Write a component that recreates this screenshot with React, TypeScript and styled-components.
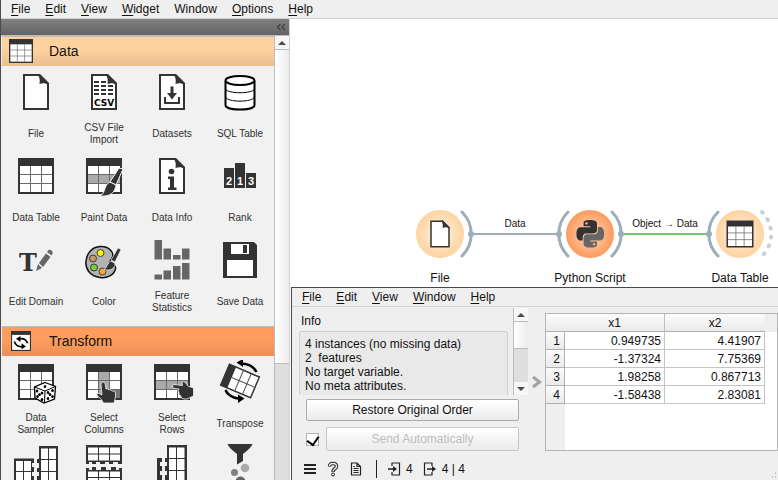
import React, { ReactNode } from "react";
import styled, { createGlobalStyle } from "styled-components";

const dark = "#333333";
const mid = "#666666";

const GlobalStyle = createGlobalStyle`
  * { box-sizing: border-box; }
  html, body, #root { height: 100%; }
  body {
    margin: 0;
    overflow: hidden;
    background: #ffffff;
    color: #111111;
    font: 12px/14px "Liberation Sans", Arial, sans-serif;
  }
  button, input { font: inherit; margin: 0; }
`;

/* ---------- layout ---------- */

const Shell = styled.div`
  display: flex;
  flex-direction: column;
  height: 100vh;
  border-left: 1px solid #4a4a4a;
`;

const MenuBar = styled.nav<{ $line: string }>`
  display: flex;
  flex: none;
  align-items: center;
  gap: 15px;
  height: 19px;
  padding: 0 10px;
  background: #efefef;
  border-bottom: 1px solid ${(p) => p.$line};
`;

const MenuButton = styled.button`
  padding: 0;
  border: 0;
  background: none;
  color: #111111;
  line-height: 16px;
  white-space: nowrap;
  u { text-underline-offset: 2px; }
`;

const Main = styled.div`
  display: flex;
  flex: 1;
  min-height: 0;
`;

const Sidebar = styled.aside`
  display: flex;
  flex: none;
  flex-direction: column;
  width: 289px;
  background: #f1f1f1;
  border-right: 1px solid #cdd2d2;
`;

const DockHeader = styled.div`
  display: flex;
  flex: none;
  align-items: center;
  justify-content: flex-end;
  height: 16px;
  padding-right: 3px;
  background: linear-gradient(#808080, #646464);
`;

const CollapseButton = styled.button`
  display: flex;
  padding: 0;
  border: 0;
  background: none;
`;

const ToolboxRow = styled.div`
  display: flex;
  flex: 1;
  min-height: 0;
  border-top: 1px solid #bdbdbd;
`;

const Toolbox = styled.div`
  flex: 1;
  min-width: 0;
  overflow: hidden;
  padding-left: 1px;
`;

const CategoryHeader = styled.button<{ $from: string; $to: string }>`
  display: flex;
  align-items: center;
  width: 100%;
  height: 30px;
  padding: 0 0 1px 7px;
  border: 0;
  border-top: 1px solid #bdbdbd;
  background: linear-gradient(${(p) => p.$from} 45%, ${(p) => p.$to});
  color: #111111;
  font-size: 14px;
  text-align: left;
`;

const CategoryIcon = styled.span`
  display: flex;
  justify-content: center;
  width: 24px;
  margin-right: 16px;
`;

const WidgetGrid = styled.div`
  display: grid;
  grid-template-columns: repeat(4, 1fr);
  grid-auto-rows: 84px;
  padding-bottom: 8px;
`;

const WidgetCell = styled.button`
  display: flex;
  flex-direction: column;
  align-items: center;
  justify-content: flex-start;
  padding: 4px 0 0;
  border: 0;
  background: none;
  color: #303030;
  font-size: 10px;
  line-height: 12px;
`;

const WidgetLabel = styled.span`
  display: flex;
  align-items: center;
  height: 32px;
  margin-top: 4px;
  text-align: center;
  white-space: pre-line;
`;

const ScrollTrack = styled.div`
  display: flex;
  flex: none;
  flex-direction: column;
  width: 15px;
  background: #dedede;
  border-left: 1px solid #bcbcbc;
`;

const ScrollButton = styled.button`
  display: flex;
  flex: none;
  align-items: center;
  justify-content: center;
  height: 13px;
  padding: 0;
  border: 0;
  background: #f7f7f7;
`;

const ScrollThumb = styled.div<{ $share: string }>`
  flex: none;
  height: ${(p) => p.$share};
  background: linear-gradient(to right, #ffffff, #ececec);
  border: solid #bcbcbc;
  border-width: 1px 0;
`;

const Spacer = styled.div`
  flex: 1;
`;

const Workspace = styled.main`
  display: flex;
  flex: 1;
  flex-direction: column;
  min-width: 0;
  background: #ffffff;
`;

/* ---------- workflow canvas ---------- */

const Canvas = styled.section`
  position: relative;
  flex: none;
  height: 268px;
  overflow: hidden;
`;

const Wires = styled.svg`
  position: absolute;
  left: 0;
  top: 0;
`;

const NodeCaption = styled.span<{ $x: number }>`
  position: absolute;
  left: ${(p) => p.$x - 50}px;
  top: 252px;
  width: 100px;
  text-align: center;
`;

const LinkCaption = styled.span<{ $x: number }>`
  position: absolute;
  left: ${(p) => p.$x - 45}px;
  top: 199px;
  width: 90px;
  font-size: 10px;
  line-height: 12px;
  text-align: center;
`;

/* ---------- data table window ---------- */

const Dialog = styled.section`
  display: flex;
  flex: 1;
  flex-direction: column;
  min-height: 0;
  margin-left: 1px;
  background: #efefef;
  border: solid #484848;
  border-width: 1px 0 0 1px;
`;

const DialogBody = styled.div`
  display: flex;
  flex: none;
  height: 144px;
`;

const Controls = styled.div`
  display: flex;
  flex: none;
  flex-direction: column;
  width: 236px;
  padding: 1px 0 0 7px;
`;

const InfoScroll = styled.div`
  display: flex;
  height: 87px;
`;

const InfoPane = styled.div`
  flex: 1;
  overflow: hidden;
  padding-right: 5px;
`;

const InfoTitle = styled.h2`
  margin: 0;
  padding: 6px 0 3px 2px;
  font-size: 12px;
  font-weight: normal;
`;

const InfoBox = styled.div`
  height: 90px;
  padding: 5px;
  background: #e9e9e9;
  border: 1px solid #cecece;
  border-radius: 2px;
  white-space: pre;
`;

const ActionArea = styled.div`
  display: flex;
  flex-direction: column;
  gap: 6px;
  padding: 4px 9px 0 7px;
`;

const PushButton = styled.button`
  flex: 1;
  min-height: 22px;
  padding: 0;
  background: linear-gradient(#ffffff, #ebebeb);
  border: 1px solid #ababab;
  border-radius: 2px;
  color: #111111;
  &:disabled {
    min-height: 24px;
    color: #bdbdbd;
    border-color: #c6c6c6;
  }
`;

const AutoRow = styled.div`
  display: flex;
  align-items: center;
  gap: 7px;
`;

const Check = styled.input`
  display: grid;
  place-content: center;
  appearance: none;
  width: 13px;
  height: 13px;
  background: #ffffff;
  border: 1px solid #b0b0b0;
  &:checked::before {
    content: "";
    width: 6px;
    height: 9px;
    border: solid #000000;
    border-width: 0 2px 2px 0;
    transform: rotate(35deg);
  }
`;

const Splitter = styled.button`
  display: flex;
  flex: none;
  align-items: center;
  width: 17px;
  padding: 6px 0 0 3px;
  border: 0;
  background: none;
`;

const TableFrame = styled.div`
  flex: 1;
  min-width: 0;
  margin-top: 6px;
  background: linear-gradient(to right, #efefef 19px, #ffffff 19px);
  border: 1px solid #b4b4b4;
`;

const Grid = styled.table`
  width: 100%;
  table-layout: fixed;
  border-spacing: 0;
`;

const HeadCell = styled.th<{ $width?: number; $divider?: boolean }>`
  width: ${(p) => (p.$width ? `${p.$width}px` : "auto")};
  height: 18px;
  padding: 0;
  background: ${(p) => (p.$width ? "linear-gradient(#fbfbfb, #eaeaea)" : "#efefef")};
  border-bottom: 1px solid ${(p) => (p.$width ? "#b0b0b0" : "#efefef")};
  border-right: ${(p) => (p.$divider ? "1px solid #bdbdbd" : "0")};
  font-weight: normal;
`;

const RowHead = styled.th`
  height: 18px;
  padding: 0 4px 0 0;
  background: linear-gradient(#fbfbfb, #eaeaea);
  border: solid #b0b0b0;
  border-width: 0 1px 1px 0;
  font-weight: normal;
  text-align: right;
`;

const Cell = styled.td`
  padding: 0 3px 0 0;
  background: #ffffff;
  border: solid #c4c4c4;
  border-width: 0 1px 1px 0;
  text-align: right;
`;

const StatusBar = styled.footer`
  display: flex;
  flex: 1;
  align-items: center;
  min-height: 0;
  padding: 6px 0 0 10px;
`;

const IconButton = styled.button`
  display: flex;
  align-items: center;
  justify-content: center;
  width: 16px;
  height: 16px;
  margin-right: 7px;
  padding: 0;
  border: 0;
  background: none;
`;

const StatusDivider = styled.span`
  width: 1px;
  height: 18px;
  margin: 0 10px 0 5px;
  background: #222222;
`;

const Count = styled.span`
  display: flex;
  align-items: center;
  gap: 5px;
  margin-right: 10px;
`;

const Grip = styled.svg`
  align-self: flex-end;
  margin-left: auto;
`;

/* ---------- drawings ---------- */

const Sheet = ({ children }: { children?: ReactNode }) => (
  <g>
    <path d="M10 5H25L34 14V39H10Z" fill="#fff" stroke={dark} strokeWidth="2" />
    <path d="M23 4C26 7 26 10 25.500 14C29 12.500 32 13 35 15V13L26 4Z" fill={dark} />
    {children}
  </g>
);

const Spreadsheet = ({ children, marks }: { children?: ReactNode; marks?: ReactNode }) => (
  <g>
    <rect x="4" y="4" width="36" height="36" fill={dark} />
    <rect x="6" y="12" width="32" height="26" fill="#fff" />
    {marks}
    <path d="M16.500 12V38M27.500 12V38M6 20.500H38M6 29.500H38" stroke="#6a6a6a" fill="none" />
    {children}
  </g>
);

const Brush = () => (
  <g stroke="#f4f4f4" strokeWidth="1" fill={dark}>
    <path d="M37 14L41 15L34 31L28 28Z" />
    <path d="M28 28L34 31C33 38 29 43 18 42C22 40 22 36 24 32C25 30 26 29 28 28Z" />
  </g>
);

const Pips = ({ points }: { points: number[][] }) => (
  <g fill="#000">
    {points.map(([x, y]) => (
      <ellipse key={`${x}-${y}`} cx={x} cy={y} rx="1.300" ry="1.500" />
    ))}
  </g>
);

const PYTHON =
  "M14.25.18l.9.2.73.26.59.3.45.32.34.34.25.34.16.33.1.3.04.26.02.2-.01.13V8.5l-.05.63-.13.55-.21.46-.26.38-.3.31-.33.25-.35.19-.35.14-.33.1-.3.07-.26.04-.21.02H8.77l-.69.05-.59.14-.5.22-.41.27-.33.32-.27.35-.2.36-.15.37-.1.35-.07.32-.04.27-.02.21v3.06H3.17l-.21-.03-.28-.07-.32-.12-.35-.18-.36-.26-.36-.36-.35-.46-.32-.59-.28-.73-.21-.88-.14-1.05-.05-1.23.06-1.22.16-1.04.24-.87.32-.71.36-.57.4-.44.42-.33.42-.24.4-.16.36-.1.32-.05.24-.01h.16l.06.01h8.16v-.83H6.18l-.01-2.75-.02-.37.05-.34.11-.31.17-.28.25-.26.31-.23.38-.2.44-.18.51-.15.58-.12.64-.1.71-.06.77-.04.84-.02 1.27.05zm-6.3 1.98l-.23.33-.08.41.08.41.23.34.33.22.41.09.41-.09.33-.22.23-.34.08-.41-.08-.41-.23-.33-.33-.22-.41-.09-.41.09z";

const art: Record<string, ReactNode> = {
  file: <Sheet />,
  csv: (
    <Sheet>
      <path
        d="M12 12H17M19 12H24M12 16H17M19 16H24M26 16H31M12 20H17M19 20H24M26 20H31M12 24H17M19 24H24M26 24H31"
        stroke={dark}
        strokeWidth="2"
      />
      <text x="22" y="36" textAnchor="middle" fontFamily="DejaVu Sans, sans-serif" fontWeight="bold" fontSize="9" fill="#000">
        CSV
      </text>
    </Sheet>
  ),
  datasets: (
    <Sheet>
      <path d="M20.500 16.500H23.500V23H27L22 29.500L17 23H20.500Z" fill={dark} />
      <path d="M15 27V33H29V27" stroke={dark} strokeWidth="2" fill="none" />
    </Sheet>
  ),
  sql: (
    <g fill="#fff" stroke="#000">
      <path d="M7.500 11V35C7.500 41 36.500 41 36.500 35V11" strokeWidth="2" />
      <path d="M7.500 19C9 24 35 24 36.500 19M7.500 27C9 32.500 35 32.500 36.500 27" strokeWidth="1" fill="none" />
      <ellipse cx="22" cy="10.500" rx="14.500" ry="4.500" strokeWidth="2" />
    </g>
  ),
  table: <Spreadsheet />,
  paint: (
    <Spreadsheet marks={<rect x="6" y="20" width="32" height="9" fill="#aaa" />}>
      <Brush />
    </Spreadsheet>
  ),
  info: (
    <Sheet>
      <circle cx="21.500" cy="17.500" r="2.800" fill={dark} />
      <path d="M18 22.500H24V33.500H26.500V36H18V33.500H20V25H18Z" fill={dark} />
    </Sheet>
  ),
  rank: (
    <g fill={dark}>
      <path d="M6 14H16V34H6ZM17 9H27V34H17ZM28 19H38V34H28Z" />
      <g fill="#fff" fontFamily="Liberation Sans, sans-serif" fontWeight="bold" fontSize="11" textAnchor="middle">
        <text x="11" y="31">2</text>
        <text x="22" y="31">1</text>
        <text x="33" y="31">3</text>
      </g>
    </g>
  ),
  domain: (
    <g>
      <text x="14" y="33" textAnchor="middle" fontFamily="DejaVu Serif, serif" fontWeight="bold" fontSize="24" fill={dark}>
        T
      </text>
      <path d="M22 33L24 26L28 30ZM25 25L32 15.500L36.500 19L29 29ZM33 14L34.500 12Q36 11 38 13Q39 14 38.500 15.500L37.500 17.500Z" fill={mid} />
    </g>
  ),
  color: (
    <g>
      <path
        d="M18 8.500C27 8 32 14 30.500 19C29 23 26 24 28 26C31 28 34 26 33.500 31C32 37 25 40.500 18 39.500C8 38 3 31 4 23C5 15 10 9 18 8.500Z"
        fill="#b3b3b3"
        stroke="#111"
        strokeWidth="1.500"
      />
      <g stroke="#222" strokeWidth=".8">
        <circle cx="18.500" cy="15" r="3.500" fill="#fff200" />
        <circle cx="11" cy="20.500" r="3.500" fill="#c49a6c" />
        <circle cx="12" cy="29.500" r="3.500" fill="#7ac943" />
        <circle cx="20.500" cy="33.500" r="3.500" fill="#fba63c" />
      </g>
      <path d="M36 10L39 11.500L33 24L29 22Z" fill={dark} stroke="#eee" strokeWidth=".7" />
      <path d="M29 23L33 25.500C33 31 28 33 22 31.500C25 30 25 25 29 23Z" fill={dark} stroke="#eee" strokeWidth=".7" />
    </g>
  ),
  stats: (
    <path
      d="M4.500 2H12V21.500H4.500ZM13.500 10.500H21V21.500H13.500ZM23 17H30.500V21.500H23ZM32 10.500H39.500V21.500H32ZM4.500 36.500H12V41.500H4.500ZM13.500 32.500H21V41.500H13.500ZM23 28H30.500V41.500H23ZM32 25H39.500V41.500H32Z"
      fill={mid}
    />
  ),
  save: (
    <g>
      <path d="M5 4H36L39 7V40H5Z" fill={dark} />
      <path d="M13 6H31V16H13ZM9 22H35V38H9Z" fill="#fff" />
      <path d="M25 7H29V15H25Z" fill={dark} />
    </g>
  ),
  sampler: (
    <Spreadsheet>
      <path d="M31 22.500L41.500 26.500L40.500 39L30 43L21 38L20.500 27Z" fill="#fff" stroke="#000" strokeWidth="1.300" />
      <path d="M20.500 27L31 31L41.500 26.500M31 31L30.500 43" fill="none" stroke="#000" />
      <Pips
        points={[
          [31, 26.5], [23, 31], [28, 33], [25.5, 34.5], [23.5, 36.5], [28, 39.5],
          [34, 32.5], [38.5, 30.5], [36, 34.5], [34, 38.5], [38.5, 36.5],
        ]}
      />
    </Spreadsheet>
  ),
  columns: (
    <Spreadsheet
      marks={
        <>
          <rect x="17" y="12" width="10" height="26" fill="#aaa" />
          <rect x="28" y="30" width="10" height="8" fill="#777" />
        </>
      }
    >
      <path
        d="M19 24Q19 22 21 22Q23 22 23.200 24L24 29Q26 28 27 30Q29 29 30 31Q33 30 33.500 33V37L32 43H21.500Q20 39 15.500 36Q14 34 16 33L20 35Z"
        fill={dark}
        stroke="#f4f4f4"
        strokeWidth=".8"
      />
    </Spreadsheet>
  ),
  rows: (
    <Spreadsheet marks={<rect x="6" y="20" width="32" height="9" fill="#aaa" />}>
      <path
        d="M24 24.500Q22 25 22.500 27Q23 28.500 25 28.500L29 29Q27 31 29 32Q28 35 30.500 35.500Q31 39 34 39H37L43.500 36V28L38 26Q35 21.500 33.500 21.500Q31 22 32.500 25.500Z"
        fill={dark}
        stroke="#f4f4f4"
        strokeWidth=".8"
      />
    </Spreadsheet>
  ),
  transpose: (
    <g>
      <g transform="rotate(23 22 21)">
        <rect x="5" y="9" width="34" height="24" fill={dark} />
        <rect x="13" y="10.500" width="24.500" height="21" fill="#fff" />
        <path d="M21 10V32M29.500 10V32M13 21H38" stroke="#555" fill="none" />
      </g>
      <path d="M38.500 12C36 7 31 4 24 3.500M7.500 30C9 34 14 38 20 38.500" stroke="#000" strokeWidth="2.500" fill="none" />
      <path d="M25 -1V7L18.500 2.500ZM20 34.500V43L26.500 38.500Z" fill="#000" />
    </g>
  ),
  mergeCols: (
    <g>
      <path d="M0 14.500H20V19H18V23H20V28H18V32H20V44H0ZM25 2H44V44H25V36H23V32H25V28H23V24H25V19H23V15H25Z" fill={dark} />
      <path d="M2 17H9V27H2ZM10 17H17V27H10ZM2 28H9V44H2ZM10 28H17V44H10ZM27 4.500H34V15H27ZM35 4.500H42V15H35ZM27 16H34V27H27ZM35 16H42V27H35ZM27 28H34V44H27ZM35 28H42V44H35Z" fill="#fff" />
    </g>
  ),
  concat: (
    <g>
      <path d="M4 1H40V20H36V18H31V20H27V18H23V20H18V18H14V20H10V18H7V20H4ZM4 24H7V26H10V23H14V26H19V23H24V26H29V23H34V26H37V24H40V44H4Z" fill={dark} />
      <path d="M6 3.500H16V9.500H6ZM17 3.500H27V9.500H17ZM28 3.500H38V9.500H28ZM6 10.500H16V16.500H6ZM17 10.500H27V16.500H17ZM28 10.500H38V16.500H28ZM6 27.500H16V33H6ZM17 27.500H27V33H17ZM28 27.500H38V33H28ZM6 34H16V44H6ZM17 34H27V44H17ZM28 34H38V44H28Z" fill="#fff" />
    </g>
  ),
  mergeRows: (
    <g>
      <path d="M17 1H37V44H17V36H15V31H17V27H15V22H17V18H15V14H17ZM7 14H12V18H10V22H12V27H10V31H12V44H7Z" fill={dark} />
      <path d="M19 3.500H26V14H19ZM27 3.500H34.500V14H27ZM19 15H26V26H19ZM27 15H34.500V26H27ZM19 27H26V44H19ZM27 27H34.500V44H27Z" fill="#fff" />
    </g>
  ),
  funnel: (
    <g>
      <path d="M9.500 0H34.500Q33 4 25 10V17L19 20.500V10Q11 4 9.500 0Z" fill={dark} />
      <circle cx="27" cy="24" r="4.300" fill="#aaa" />
      <circle cx="16.500" cy="28.500" r="3.500" fill="#808080" />
      <circle cx="22.500" cy="37.500" r="5" fill={mid} />
    </g>
  ),
  cycle: (
    <g>
      <rect x="4" y="4" width="36" height="36" fill={dark} />
      <rect x="6" y="11" width="32" height="27" fill="#fff" />
      <g fill="none" stroke="#000" strokeWidth="3">
        <path d="M19 18Q30 16 34 26M25 32Q14 34 10 23" />
      </g>
      <path d="M21 13V24L13 18ZM23 26V37L31 32Z" fill="#000" />
    </g>
  ),
};

const Art = ({ name, size = 44, crop = "0 0 44 44" }: { name: string; size?: number; crop?: string }) => (
  <svg width={size} height={size} viewBox={crop} aria-hidden="true">
    {art[name]}
  </svg>
);

const Arrow = ({ down = false }: { down?: boolean }) => (
  <svg width="8" height="4" viewBox="0 0 8 4" aria-hidden="true">
    <path d={down ? "M0 0H8L4 4Z" : "M0 4H8L4 0Z"} fill="#4a4a4a" />
  </svg>
);

/* ---------- data ---------- */

const mainMenu = ["_File", "_Edit", "_View", "_Widget", "Window", "_Options", "_Help"];
const dialogMenu = ["_File", "_Edit", "_View", "_Window", "_Help"];

const dataWidgets = [
  ["file", "File"],
  ["csv", "CSV File\nImport"],
  ["datasets", "Datasets"],
  ["sql", "SQL Table"],
  ["table", "Data Table"],
  ["paint", "Paint Data"],
  ["info", "Data Info"],
  ["rank", "Rank"],
  ["domain", "Edit Domain"],
  ["color", "Color"],
  ["stats", "Feature\nStatistics"],
  ["save", "Save Data"],
];

const transformWidgets = [
  ["sampler", "Data\nSampler"],
  ["columns", "Select\nColumns"],
  ["rows", "Select\nRows"],
  ["transpose", "Transpose"],
  ["mergeCols", ""],
  ["concat", ""],
  ["mergeRows", ""],
  ["funnel", ""],
];

const rows = [
  ["0.949735", "4.41907"],
  ["-1.37324", "7.75369"],
  ["1.98258", "0.867713"],
  ["-1.58438", "2.83081"],
];

const Menu = ({ items, line }: { items: string[]; line: string }) => (
  <MenuBar $line={line}>
    {items.map((item) => (
      <MenuButton key={item} type="button">
        {item.startsWith("_") ? (
          <>
            <u>{item[1]}</u>
            {item.slice(2)}
          </>
        ) : (
          item
        )}
      </MenuButton>
    ))}
  </MenuBar>
);

const Widgets = ({ items }: { items: string[][] }) => (
  <WidgetGrid>
    {items.map(([icon, label]) => (
      <WidgetCell key={icon} type="button">
        <Art name={icon} />
        <WidgetLabel>{label}</WidgetLabel>
      </WidgetCell>
    ))}
  </WidgetGrid>
);

const Workflow = () => (
  <Canvas>
    <Wires width="600" height="268" viewBox="0 0 600 268" aria-hidden="true">
      <defs>
        <radialGradient id="sand">
          <stop offset="0" stopColor="#fff3e4" />
          <stop offset="1" stopColor="#ffd39f" />
        </radialGradient>
        <radialGradient id="coral">
          <stop offset="0" stopColor="#ffd9c2" />
          <stop offset="1" stopColor="#ff9a5c" />
        </radialGradient>
      </defs>
      <path d="M181 215H269" stroke="#9caeb9" strokeWidth="2" />
      <path d="M331 215H419" stroke="#6cc967" strokeWidth="2" />
      <circle cx="150" cy="215" r="24" fill="url(#sand)" />
      <circle cx="300" cy="215" r="24" fill="url(#coral)" />
      <circle cx="450" cy="215" r="24" fill="url(#sand)" />
      <g fill="none" stroke="#9caeb9" strokeWidth="3" strokeLinecap="round">
        <path d="M172 193A31 31 0 0 1 172 237M278 193A31 31 0 0 0 278 237" />
        <path d="M322 193A31 31 0 0 1 322 237M428 193A31 31 0 0 0 428 237" />
        <path d="M472 193A31 31 0 0 1 472 237" stroke="#c8d1d6" strokeWidth="4" strokeDasharray="1 8" />
      </g>
      <g fill="#9caeb9">
        <circle cx="181" cy="215" r="3" />
        <circle cx="269" cy="215" r="3" />
        <circle cx="331" cy="215" r="3" />
        <circle cx="419" cy="215" r="3" />
      </g>
      <g transform="translate(133.500 198.500) scale(.75)">{art.file}</g>
      <g transform="translate(433.500 198.500) scale(.75)">{art.table}</g>
      <g transform="translate(286.500 201) scale(1.150)">
        <path d={PYTHON} fill={dark} />
        <path d={PYTHON} fill={mid} transform="rotate(180 12 12)" />
      </g>
    </Wires>
    <LinkCaption $x={225}>Data</LinkCaption>
    <LinkCaption $x={375}>Object → Data</LinkCaption>
    <NodeCaption $x={150}>File</NodeCaption>
    <NodeCaption $x={300}>Python Script</NodeCaption>
    <NodeCaption $x={450}>Data Table</NodeCaption>
  </Canvas>
);

const TableWindow = () => (
  <Dialog>
    <Menu items={dialogMenu} line="#d2d2d2" />
    <DialogBody>
      <Controls>
        <InfoScroll>
          <InfoPane>
            <InfoTitle>Info</InfoTitle>
            <InfoBox>{"4 instances (no missing data)\n2  features\nNo target variable.\nNo meta attributes."}</InfoBox>
          </InfoPane>
          <ScrollTrack>
            <ScrollButton type="button" aria-label="Scroll up">
              <Arrow />
            </ScrollButton>
            <ScrollThumb $share="28px" />
            <Spacer />
            <ScrollButton type="button" aria-label="Scroll down">
              <Arrow down />
            </ScrollButton>
          </ScrollTrack>
        </InfoScroll>
        <ActionArea>
          <PushButton type="button">Restore Original Order</PushButton>
          <AutoRow>
            <Check type="checkbox" defaultChecked aria-label="Send Automatically" />
            <PushButton type="button" disabled>
              Send Automatically
            </PushButton>
          </AutoRow>
        </ActionArea>
      </Controls>
      <Splitter type="button" aria-label="Toggle controls">
        <svg width="11" height="14" viewBox="0 0 11 14" aria-hidden="true">
          <path d="M2 2L8.500 7L2 12" fill="none" stroke="#a2a2a2" strokeWidth="3" />
        </svg>
      </Splitter>
      <TableFrame>
        <Grid>
          <thead>
            <tr>
              <HeadCell $width={19} />
              <HeadCell $width={100} $divider>
                x1
              </HeadCell>
              <HeadCell $width={100}>x2</HeadCell>
              <HeadCell />
            </tr>
          </thead>
          <tbody>
            {rows.map(([a, b], i) => (
              <tr key={a}>
                <RowHead scope="row">{i + 1}</RowHead>
                <Cell>{a}</Cell>
                <Cell>{b}</Cell>
              </tr>
            ))}
          </tbody>
        </Grid>
      </TableFrame>
    </DialogBody>
    <StatusBar>
      <IconButton type="button" aria-label="Menu">
        <svg width="14" height="14" viewBox="0 0 14 14">
          <path d="M1 3H13M1 7H13M1 11H13" stroke="#222" strokeWidth="2" />
        </svg>
      </IconButton>
      <IconButton type="button" aria-label="Help">
        <svg width="12" height="16" viewBox="0 0 12 16">
          <path d="M2.500 5.500Q2.500 2.500 6 2.500Q9.500 2.500 9.500 5.300Q9.500 7 7.500 8Q6 9 6 11" fill="none" stroke="#222" strokeWidth="3.400" />
          <path d="M2.500 5Q2.500 2.500 6 2.500Q9.500 2.500 9.500 5.300Q9.500 7 7.500 8Q6 9 6 10.500" fill="none" stroke="#efefef" strokeWidth="1.400" />
          <circle cx="6" cy="13.500" r="1.500" fill="#efefef" stroke="#222" />
        </svg>
      </IconButton>
      <IconButton type="button" aria-label="Report">
        <svg width="12" height="14" viewBox="0 0 12 14">
          <path d="M1.500 1H7L10.500 4.500V13H1.500ZM7 1V4.500H10.500M3.500 6.500H8.500M3.500 8.500H8.500M3.500 10.500H8.500M3.500 4.500H5" fill="none" stroke="#222" strokeWidth="1.200" />
        </svg>
      </IconButton>
      <StatusDivider />
      <Count>
        <svg width="14" height="14" viewBox="0 0 14 14" aria-hidden="true">
          <path d="M5 4V1H12.500V13H5V10" fill="none" stroke="#222" strokeWidth="1.200" />
          <path d="M1 7H7" stroke="#222" strokeWidth="1.500" />
          <path d="M6 4L10 7L6 10Z" fill="#222" />
        </svg>
        4
      </Count>
      <Count>
        <svg width="14" height="14" viewBox="0 0 14 14" aria-hidden="true">
          <path d="M9 4V1H1.500V13H9V10" fill="none" stroke="#222" strokeWidth="1.200" />
          <path d="M4 7H10" stroke="#222" strokeWidth="1.500" />
          <path d="M9 4L13 7L9 10Z" fill="#222" />
        </svg>
        4 | 4
      </Count>
      <Grip width="8" height="8" viewBox="0 0 8 8" aria-hidden="true">
        <path d="M5 1H6M5 5H6M2 5H3" stroke="#9a9a9a" />
      </Grip>
    </StatusBar>
  </Dialog>
);

export default function App() {
  return (
    <>
      <GlobalStyle />
      <Shell>
        <Menu items={mainMenu} line="#d0d0d0" />
        <Main>
          <Sidebar>
            <DockHeader>
              <CollapseButton type="button" aria-label="Collapse">
                <svg width="10" height="8" viewBox="0 0 10 8">
                  <path d="M4.500 1L1.500 4L4.500 7M9 1L6 4L9 7" fill="none" stroke="#3c3c3c" strokeWidth="1.200" />
                </svg>
              </CollapseButton>
            </DockHeader>
            <ToolboxRow>
              <Toolbox>
                <CategoryHeader type="button" $from="#ffd19e" $to="#eabf8e">
                  <CategoryIcon>
                    <Art name="table" size={24} crop="4 4 36 36" />
                  </CategoryIcon>
                  Data
                </CategoryHeader>
                <Widgets items={dataWidgets} />
                <CategoryHeader type="button" $from="#ff9d5e" $to="#e98f55">
                  <CategoryIcon>
                    <Art name="cycle" size={20} crop="4 4 36 36" />
                  </CategoryIcon>
                  Transform
                </CategoryHeader>
                <Widgets items={transformWidgets} />
              </Toolbox>
              <ScrollTrack>
                <ScrollButton type="button" aria-label="Scroll up">
                  <Arrow />
                </ScrollButton>
                <ScrollThumb $share="71%" />
              </ScrollTrack>
            </ToolboxRow>
          </Sidebar>
          <Workspace>
            <Workflow />
            <TableWindow />
          </Workspace>
        </Main>
      </Shell>
    </>
  );
}
